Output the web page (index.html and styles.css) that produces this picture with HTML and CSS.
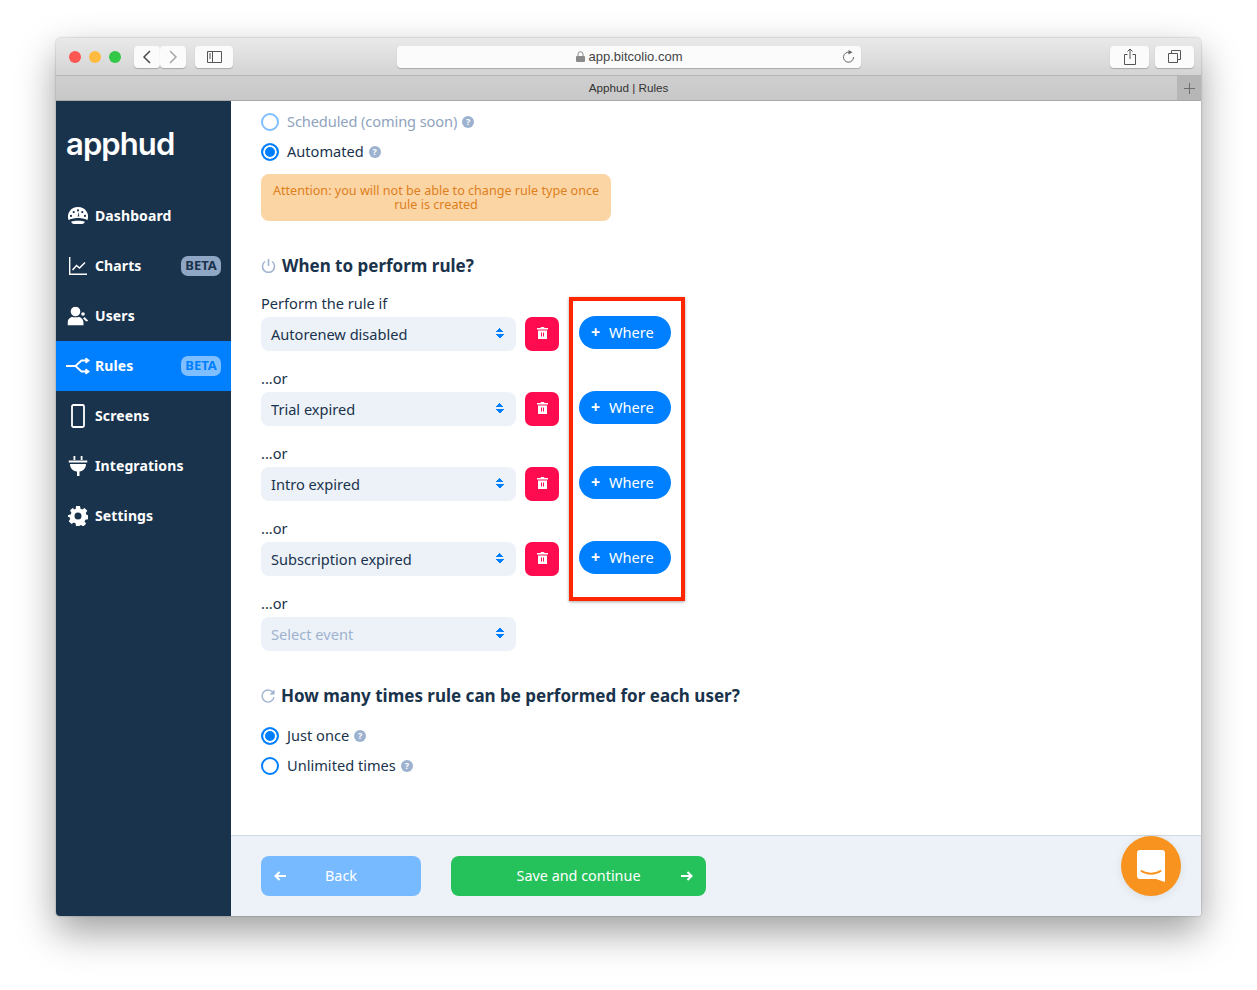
FILE: index.html
```html
<!DOCTYPE html>
<html lang="en">
<head>
    <meta charset="UTF-8">
    <meta name="viewport" content="width=device-width, initial-scale=1.0">
    <title>Apphud | Rules</title>
    <link rel="stylesheet" href="styles.css">
</head>
<body>
    <div class="window">
        <div class="toolbar">
            <div class="lights">
                <span class="light red"></span>
                <span class="light yellow"></span>
                <span class="light green"></span>
            </div>
            <div class="tool-btn nav-btn">
                <svg width="10" height="16" viewBox="0 0 10 16"><path d="M8 2L2 8l6 6" fill="none" stroke="#4a4a4a" stroke-width="1.5"/></svg>
            </div>
            <div class="tool-btn nav-btn">
                <svg width="10" height="16" viewBox="0 0 10 16"><path d="M2 2l6 6-6 6" fill="none" stroke="#a8a8a8" stroke-width="1.5"/></svg>
            </div>
            <div class="tool-btn side-btn">
                <svg width="15" height="12" viewBox="0 0 15 12"><path d="M.5.5h14v11H.5zM5.500.5v11M2 3h2M2 5h2M2 7h2" fill="none" stroke="#555" stroke-width="1"/></svg>
            </div>
            <div class="address">
                <svg class="lock" width="9" height="11" viewBox="0 0 9 11"><path d="M2 5V3.200a2.500 2.500 0 0 1 5 0V5" fill="none" stroke="#8a8a8a" stroke-width="1"/><rect y="5" width="9" height="6" rx="1" fill="#8a8a8a"/></svg>
                <span>app.bitcolio.com</span>
                <svg class="reload" width="13" height="14" viewBox="0 0 13 14"><path d="M7.500 2.300A5 5 0 1 0 11.500 7" fill="none" stroke="#666" stroke-width="1"/><path d="M6.500 0l4 2.300-4 2.300z" fill="#666"/></svg>
            </div>
            <div class="tool-btn share-btn">
                <svg width="12" height="17" viewBox="0 0 12 17"><path d="M3.500 6.500H.5v10h11v-10h-3M6 11V1M3.500 3.500L6 1l2.500 2.500" fill="none" stroke="#555" stroke-width="1"/></svg>
            </div>
            <div class="tool-btn tabs-btn">
                <svg width="13" height="13" viewBox="0 0 13 13"><path d="M3.500 3V.5h9v9H10M.5 3.500h9v9h-9z" fill="none" stroke="#555" stroke-width="1"/></svg>
            </div>
        </div>
        <div class="tabbar">
            <div class="tab-title">Apphud | Rules</div>
            <div class="new-tab">
                <svg width="11" height="11" viewBox="0 0 11 11"><path d="M5.500 0v11M0 5.500h11" stroke="#6f6f6f" stroke-width="1"/></svg>
            </div>
        </div>
        <div class="app">
            <aside class="sidebar">
                <div class="logo">apphud</div>
                <nav>
                    <a class="nav-item">
                        <svg class="nav-icon" width="20" height="18" viewBox="0 0 20 18"><path fill-rule="evenodd" d="M10 0a10 9.500 0 0 1 9.300 13.200c-.9-.9-5-2.200-9.300-2.200S1.600 12.300.7 13.200A10 9.500 0 0 1 10 0zM10 2.300a1.100 1.100 0 1 0 0 2.200 1.100 1.100 0 0 0 0-2.200zM5.700 4a1.100 1.100 0 1 0 0 2.200 1.100 1.100 0 0 0 0-2.200zM14.300 4a1.100 1.100 0 1 0 0 2.200 1.100 1.100 0 0 0 0-2.200zM3 7.800A1.100 1.100 0 1 0 3 10a1.100 1.100 0 0 0 0-2.200zM17 7.800a1.100 1.100 0 1 0 0 2.200 1.100 1.100 0 0 0 0-2.200zM10.900 5L9.600 9.600h1.600z" fill="#fff"/><path d="M3.600 14.600c2-1.200 10.800-1.200 12.800 0 .6.400.2 1.200-.4 1.600-1.600 1.200-10.400 1.200-12 0-.6-.4-1-1.200-.4-1.600z" fill="#fff"/></svg>
                        <span>Dashboard</span>
                    </a>
                    <a class="nav-item">
                        <svg class="nav-icon" width="18" height="18" viewBox="0 0 18 18"><path d="M.7 0v17.300H18" fill="none" stroke="#fff" stroke-width="1.400"/><path d="M3.500 13l4-4.500 3 2.500 5.500-5.500" fill="none" stroke="#fff" stroke-width="1.500"/></svg>
                        <span>Charts</span>
                        <em class="beta">BETA</em>
                    </a>
                    <a class="nav-item">
                        <svg class="nav-icon" width="21" height="19" viewBox="0 0 21 19"><circle cx="8" cy="5" r="4.800" fill="#fff"/><path d="M0 19v-2.500C0 13 2.500 10.500 5 10.500c1 .4 5 .4 6 0 2.500 0 5 2.500 5 6V19z" fill="#fff"/><circle cx="15.500" cy="7.500" r="1.800" fill="#fff"/><path d="M17 10.500l3.800 3.800-2.200.7-3-3z" fill="#fff"/></svg>
                        <span>Users</span>
                    </a>
                    <a class="nav-item active">
                        <svg class="nav-icon rules-icon" width="24" height="17" viewBox="0 0 24 17"><path d="M0 8.500h9.500L15.500 3H22M9.500 8.500l6 5.500H22M19.500 .8L22.500 3l-3 2.200M19.500 11.800l3 2.200-3 2.200" fill="none" stroke="#fff" stroke-width="1.800"/></svg>
                        <span>Rules</span>
                        <em class="beta">BETA</em>
                    </a>
                    <a class="nav-item">
                        <svg class="nav-icon" width="14" height="24" viewBox="0 0 14 24"><rect x="1" y="1" width="12" height="22" rx="1.500" fill="none" stroke="#fff" stroke-width="1.800"/></svg>
                        <span>Screens</span>
                    </a>
                    <a class="nav-item">
                        <svg class="nav-icon" width="19" height="20" viewBox="0 0 19 20"><path d="M5 0h1.800v4H5zM12.200 0H14v4h-1.800zM0 4.500h19V6.500H0zM1.500 8h16c0 4-2.500 7-6.500 7.400V20H8.500v-4.600C4 15 1.500 12 1.500 8z" fill="#fff"/></svg>
                        <span>Integrations</span>
                    </a>
                    <a class="nav-item">
                        <svg class="nav-icon" width="20" height="20" viewBox="0 0 20 20"><path fill-rule="evenodd" d="M8 0h4l.5 2.700 1.700.7L16.500 2l2.800 2.800-1.500 2.300.7 1.700 1.500.4v4l-2.700.5-.7 1.700 1.500 2.300-2.800 2.800-2.300-1.500-1.700.7L12 20H8l-.5-2.700-1.700-.7L3.500 18 .7 15.200l1.500-2.300-.7-1.700L0 10.800V9l2.700-.5.700-1.700L2 4.500 4.500 2l2.300 1.500 1-.7zM10 6.500a3.500 3.500 0 1 0 0 7 3.500 3.500 0 0 0 0-7z" fill="#fff"/></svg>
                        <span>Settings</span>
                    </a>
                </nav>
            </aside>
            <main class="main">
                <div class="content">
                    <label class="radio disabled">
                        <span class="radio-mark"></span>
                        <span class="radio-text">Scheduled (coming soon)</span>
                        <span class="help">?</span>
                    </label>
                    <label class="radio">
                        <span class="radio-mark checked"></span>
                        <span class="radio-text">Automated</span>
                        <span class="help">?</span>
                    </label>
                    <div class="attention">Attention: you will not be able to change rule type once rule is created</div>

                    <h3 class="section-title first">
                        <svg width="15" height="15" viewBox="0 0 15 15"><path d="M7.500 0v7M4 2.500a6 6 0 1 0 7 0" fill="none" stroke="#9db2cf" stroke-width="1.500"/></svg>
                        When to perform rule?
                    </h3>

                    <div class="rules">
                        <div class="rule-label">Perform the rule if</div>
                        <div class="rule-row">
                            <div class="select"><span>Autorenew disabled</span><span class="arrows"></span></div>
                            <button class="trash-btn"><svg width="11" height="12" viewBox="0 0 11 12"><path fill-rule="evenodd" d="M0 1h3.500l.5-1h3l.5 1H11v1.500H0zM1 3.500h9V12H1zM4 5.500v4h1v-4zM6 5.500v4h1v-4z" fill="#fff"/></svg></button>
                            <button class="where-btn"><b>+</b><span>Where</span></button>
                        </div>
                        <div class="rule-label">...or</div>
                        <div class="rule-row">
                            <div class="select"><span>Trial expired</span><span class="arrows"></span></div>
                            <button class="trash-btn"><svg width="11" height="12" viewBox="0 0 11 12"><path fill-rule="evenodd" d="M0 1h3.500l.5-1h3l.5 1H11v1.500H0zM1 3.500h9V12H1zM4 5.500v4h1v-4zM6 5.500v4h1v-4z" fill="#fff"/></svg></button>
                            <button class="where-btn"><b>+</b><span>Where</span></button>
                        </div>
                        <div class="rule-label">...or</div>
                        <div class="rule-row">
                            <div class="select"><span>Intro expired</span><span class="arrows"></span></div>
                            <button class="trash-btn"><svg width="11" height="12" viewBox="0 0 11 12"><path fill-rule="evenodd" d="M0 1h3.500l.5-1h3l.5 1H11v1.500H0zM1 3.500h9V12H1zM4 5.500v4h1v-4zM6 5.500v4h1v-4z" fill="#fff"/></svg></button>
                            <button class="where-btn"><b>+</b><span>Where</span></button>
                        </div>
                        <div class="rule-label">...or</div>
                        <div class="rule-row">
                            <div class="select"><span>Subscription expired</span><span class="arrows"></span></div>
                            <button class="trash-btn"><svg width="11" height="12" viewBox="0 0 11 12"><path fill-rule="evenodd" d="M0 1h3.500l.5-1h3l.5 1H11v1.500H0zM1 3.500h9V12H1zM4 5.500v4h1v-4zM6 5.500v4h1v-4z" fill="#fff"/></svg></button>
                            <button class="where-btn"><b>+</b><span>Where</span></button>
                        </div>
                        <div class="rule-label">...or</div>
                        <div class="rule-row">
                            <div class="select placeholder"><span>Select event</span><span class="arrows"></span></div>
                        </div>
                        <div class="highlight"></div>
                    </div>

                    <h3 class="section-title second">
                        <svg width="14" height="14" viewBox="0 0 14 14"><path d="M12.500 4.500A6 6 0 1 0 13 8" fill="none" stroke="#9db2cf" stroke-width="1.400"/><path d="M13.500 .5v5h-5z" fill="#9db2cf"/></svg>
                        How many times rule can be performed for each user?
                    </h3>
                    <label class="radio">
                        <span class="radio-mark checked"></span>
                        <span class="radio-text">Just once</span>
                        <span class="help">?</span>
                    </label>
                    <label class="radio">
                        <span class="radio-mark"></span>
                        <span class="radio-text">Unlimited times</span>
                        <span class="help">?</span>
                    </label>
                </div>
                <div class="footer">
                    <button class="btn back">
                        <svg width="12" height="10" viewBox="0 0 12 10"><path d="M12 5H2M5.500 1L1.500 5l4 4" fill="none" stroke="#fff" stroke-width="2"/></svg>
                        <span>Back</span>
                        <i></i>
                    </button>
                    <button class="btn save">
                        <i></i>
                        <span>Save and continue</span>
                        <svg width="12" height="10" viewBox="0 0 12 10"><path d="M0 5h10M6.500 1l4 4-4 4" fill="none" stroke="#fff" stroke-width="2"/></svg>
                    </button>
                </div>
                <div class="chat">
                    <svg width="28" height="32" viewBox="0 0 28 32"><path d="M3 0h22a3 3 0 0 1 3 3v29l-9-3H3a3 3 0 0 1-3-3V3a3 3 0 0 1 3-3z" fill="#fff"/><path d="M4.500 21c5 3.500 14 3.500 19 0" fill="none" stroke="#f7931e" stroke-width="2" stroke-linecap="round"/></svg>
                </div>
            </main>
        </div>
    </div>
</body>
</html>
```

FILE: styles.css
```css
* {
    box-sizing: border-box;
}
html, body {
    margin: 0;
    height: 100%;
}
body {
    padding: 38px 56px 74px;
    background-color: #ffffff;
    font-family: "Noto Sans", Arial, sans-serif;
    font-size: 14.6px;
    color: #1a334c;
}
.window {
    height: 878px;
    border-radius: 5px 5px 4px 4px;
    overflow: hidden;
    display: flex;
    flex-direction: column;
    box-shadow: 0 16px 38px rgba(0, 0, 0, 0.38), 0 0 2px rgba(0, 0, 0, 0.35);
}

/* browser chrome */
.toolbar {
    height: 38px;
    display: flex;
    align-items: center;
    padding: 0 7px 0 13px;
    background: linear-gradient(#e9e9e9, #d4d4d4);
    border-bottom: 1px solid #b4b4b4;
}
.lights {
    display: flex;
    gap: 8px;
    margin-right: 13px;
}
.light {
    width: 12px;
    height: 12px;
    border-radius: 50%;
}
.light.red { background-color: #fc5753; }
.light.yellow { background-color: #fdbc40; }
.light.green { background-color: #33c748; }
.tool-btn {
    height: 22px;
    display: flex;
    align-items: center;
    justify-content: center;
    background-color: #fbfbfb;
    border-radius: 4px;
    box-shadow: 0 1px 1px rgba(0, 0, 0, 0.22);
}
.nav-btn { width: 26px; }
.side-btn { width: 38px; margin-left: 9px; }
.address {
    width: 464px;
    height: 22px;
    margin-left: 164px;
    position: relative;
    display: flex;
    align-items: center;
    justify-content: center;
    gap: 4px;
    background-color: #fbfbfb;
    border-radius: 4px;
    box-shadow: 0 1px 1px rgba(0, 0, 0, 0.22);
    font-family: "Liberation Sans", Arial, sans-serif;
    font-size: 13px;
    color: #444;
}
.reload {
    position: absolute;
    right: 6px;
    top: 4px;
}
.share-btn { width: 39px; margin-left: 249px; }
.tabs-btn { width: 39px; margin-left: 6px; }
.tabbar {
    height: 25px;
    display: flex;
    background: linear-gradient(#cfcfcf, #c8c8c8);
    border-bottom: 1px solid #a9a9a9;
}
.tab-title {
    flex: 1;
    padding-left: 24px;
    text-align: center;
    line-height: 24px;
    font-family: "Liberation Sans", Arial, sans-serif;
    font-size: 11.7px;
    color: #333;
}
.new-tab {
    width: 24px;
    display: flex;
    align-items: center;
    justify-content: center;
    background-color: #b6b6b6;
}

/* app */
.app {
    flex: 1;
    display: flex;
    min-height: 0;
}
.sidebar {
    width: 175px;
    background-color: #1a334c;
    color: #ffffff;
}
.logo {
    height: 90px;
    padding: 24px 0 0 10px;
    font-family: Inter, sans-serif;
    font-size: 31px;
    font-weight: 600;
    letter-spacing: -0.9px;
    line-height: 38px;
}
.nav-item {
    height: 50px;
    position: relative;
    display: flex;
    align-items: center;
    padding: 0 0 2px 39px;
    font-size: 14px;
    font-weight: 700;
    letter-spacing: 0.1px;
}
.nav-item.active {
    background-color: #0080ff;
}
.nav-icon {
    position: absolute;
    left: 22px;
    top: 50%;
    transform: translate(-50%, -50%);
}
.beta {
    position: absolute;
    right: 10px;
    top: 15px;
    width: 40px;
    height: 20px;
    border-radius: 7px;
    background-color: #8fa6c4;
    color: #1a334c;
    font-style: normal;
    font-size: 13px;
    line-height: 19px;
    letter-spacing: 0;
    text-align: center;
}
.active .beta {
    background-color: #80bfff;
    color: #0080ff;
}
.main {
    flex: 1;
    position: relative;
    display: flex;
    flex-direction: column;
    background-color: #ffffff;
}
.content {
    flex: 1;
    padding: 6px 30px 0;
}
.radio {
    height: 30px;
    display: flex;
    align-items: center;
    gap: 8px;
}
.radio-text {
    padding-bottom: 2px;
}
.radio.disabled {
    color: #8fa3bd;
    letter-spacing: -0.1px;
}
.radio-mark {
    width: 18px;
    height: 18px;
    border-radius: 50%;
    border: 2px solid #0080ff;
    background-color: #ffffff;
}
.radio.disabled .radio-mark {
    border-color: #80bfff;
}
.radio-mark.checked {
    background-color: #0080ff;
    box-shadow: inset 0 0 0 2px #ffffff;
}
.help {
    width: 12px;
    height: 12px;
    margin-left: -3px;
    border-radius: 50%;
    background-color: #9db2cf;
    color: #ffffff;
    font-size: 9px;
    font-weight: 700;
    line-height: 12px;
    text-align: center;
}
.attention {
    width: 350px;
    height: 47px;
    margin-top: 7px;
    padding: 10px 5px;
    border-radius: 8px;
    background-color: #fcd5a5;
    color: #dc7f1c;
    font-size: 12.6px;
    line-height: 14px;
    text-align: center;
}
.section-title {
    display: flex;
    align-items: center;
    gap: 6px;
    margin: 0;
    font-size: 17px;
    font-weight: 700;
    line-height: 24px;
}
.section-title.first { margin-top: 33px; }
.section-title.second { margin-top: 15px; margin-bottom: 13px; }
.rules {
    position: relative;
    margin-top: 16px;
}
.rule-label {
    height: 19px;
    margin-bottom: 4px;
    line-height: 19px;
}
.rule-row {
    display: flex;
    height: 52px;
}
.select {
    width: 255px;
    height: 34px;
    display: flex;
    align-items: center;
    justify-content: space-between;
    padding: 0 12px 0 10px;
    border-radius: 8px;
    background-color: #edf2f9;
}
.select.placeholder {
    color: #9db2cf;
}
.arrows {
    width: 8px;
    height: 10px;
    margin-top: -2px;
    background:
        linear-gradient(to bottom right, transparent 50%, #0080ff 50%) left top / 4px 4px no-repeat,
        linear-gradient(to bottom left, transparent 50%, #0080ff 50%) right top / 4px 4px no-repeat,
        linear-gradient(to top right, transparent 50%, #0080ff 50%) left bottom / 4px 4px no-repeat,
        linear-gradient(to top left, transparent 50%, #0080ff 50%) right bottom / 4px 4px no-repeat;
}
button {
    border: none;
    padding: 0;
    font-family: inherit;
    cursor: pointer;
}
.trash-btn {
    width: 34px;
    height: 34px;
    margin-left: 9px;
    border-radius: 7px;
    background-color: #ff0b4f;
}
.where-btn {
    width: 92px;
    height: 33px;
    margin: -1px 0 0 20px;
    display: flex;
    align-items: center;
    padding: 0 0 2px 12px;
    border-radius: 17px;
    background-color: #0080ff;
    color: #ffffff;
    font-size: 14.6px;
}
.where-btn b {
    width: 18px;
    font-size: 16px;
    text-align: left;
}
.highlight {
    position: absolute;
    left: 308px;
    top: 3px;
    width: 116px;
    height: 304px;
    border: 4px solid #ff2600;
    box-shadow: 0 1px 3px rgba(0, 0, 0, 0.35);
}
.footer {
    height: 81px;
    display: flex;
    gap: 30px;
    padding: 20px 30px;
    background-color: #edf2f9;
    border-top: 1px solid #cfd9e8;
}
.btn {
    height: 40px;
    display: flex;
    align-items: center;
    justify-content: space-between;
    padding: 0 13px;
    border-radius: 8px;
    color: #ffffff;
    font-size: 14.4px;
}
.btn span {
    padding-bottom: 2px;
}
.btn i {
    width: 12px;
}
.btn.back {
    width: 160px;
    background-color: #78baff;
}
.btn.save {
    width: 255px;
    background-color: #25c15a;
}
.chat {
    position: absolute;
    right: 20px;
    bottom: 20px;
    width: 60px;
    height: 60px;
    display: flex;
    align-items: center;
    justify-content: center;
    border-radius: 50%;
    background-color: #f7931e;
    box-shadow: 0 2px 10px rgba(0, 0, 0, 0.08);
}
```
